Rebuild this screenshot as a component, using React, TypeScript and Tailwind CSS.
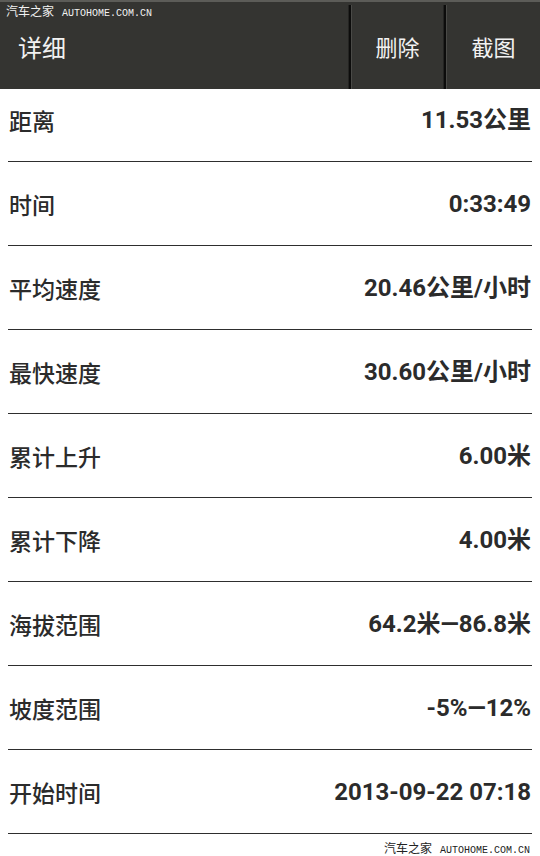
import React from "react";

const rows: [string, string][] = [
  ["距离", "11.53公里"],
  ["时间", "0:33:49"],
  ["平均速度", "20.46公里/小时"],
  ["最快速度", "30.60公里/小时"],
  ["累计上升", "6.00米"],
  ["累计下降", "4.00米"],
  ["海拔范围", "64.2米—86.8米"],
  ["坡度范围", "-5%—12%"],
  ["开始时间", "2013-09-22 07:18"],
];

function Watermark({ light }: { light?: boolean }) {
  return (
    <div
      className={`flex items-baseline gap-[8px] leading-none ${light ? "text-[#f2f2f2]" : "text-[#222]"}`}
    >
      <span className="text-[12px] [font-family:'Noto_Sans_CJK_SC',sans-serif]">汽车之家</span>
      <span className="text-[10px] [font-family:'Liberation_Mono',monospace]">AUTOHOME.COM.CN</span>
    </div>
  );
}

function Divider() {
  return (
    <div className="flex h-[84px] self-end">
      <div className="w-[1px] bg-[#242422]" />
      <div className="w-[2px] bg-[#0c0c0b]" />
      <div className="w-[1px] bg-[#4a4a47]" />
    </div>
  );
}

export default function App() {
  return (
    <div className="relative w-[540px] h-[856px] bg-white overflow-hidden [font-family:Roboto,'Noto_Sans_CJK_SC',sans-serif]">
      <div className="relative h-[89px] bg-[#343431] border-t-2 border-[#5c5c58] flex items-stretch">
        <div className="flex-1 flex items-center pl-[18px] text-[24px] text-[#f2f2f2] [font-family:'Noto_Sans_CJK_SC',sans-serif] pt-[2px]">
          详细
        </div>
        <Divider />
        <div className="w-[91px] flex items-center justify-center text-[22px] text-[#f2f2f2] [font-family:'Noto_Sans_CJK_SC',sans-serif] pt-[2px]">
          删除
        </div>
        <Divider />
        <div className="w-[93px] flex items-center justify-center text-[22px] text-[#f2f2f2] [font-family:'Noto_Sans_CJK_SC',sans-serif] pt-[2px]">
          截图
        </div>
        <div className="absolute left-[6px] top-[3px]">
          <Watermark light />
        </div>
      </div>
      <div className="flex flex-col">
        {rows.map(([label, value], i) => (
          <div
            key={label}
            className={`${i === 0 ? "h-[73px]" : "h-[84px]"} mx-[8px] border-b border-[#2e2e2e] flex items-end justify-between pb-[25px] px-[1px]`}
          >
            <span className="h-[32px] leading-[32px] text-[23px] font-medium text-[#2b2b2b] [font-family:'Noto_Sans_CJK_SC',sans-serif]">
              {label}
            </span>
            <span className="h-[32px] leading-[32px] text-[24px] font-bold text-[#2b2b2b]">
              {value}
            </span>
          </div>
        ))}
      </div>
      <div className="flex justify-end pr-[10px] pt-[8px]">
        <Watermark />
      </div>
    </div>
  );
}
